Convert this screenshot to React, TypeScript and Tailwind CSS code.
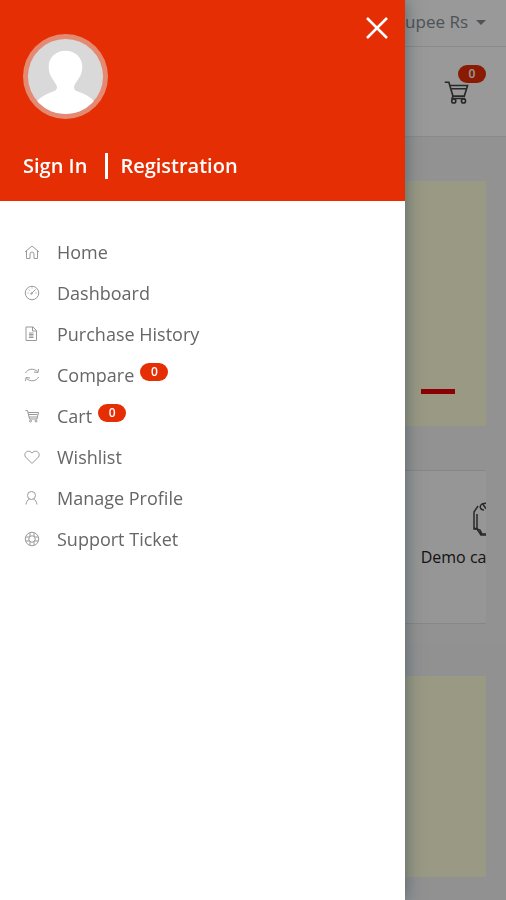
import type { ReactNode } from "react";

interface MenuItem {
  label: string;
  icon: ReactNode;
  count?: number;
}

const cartPaths = (
  <>
    <path d="M1 4h5l5 17h14L29 8H8" />
    <path d="M9 12h19M11 21l-1 3h16" />
    <circle cx="12" cy="27" r="2.500" />
    <circle cx="24" cy="27" r="2.500" />
  </>
);

const menuItems: MenuItem[] = [
  {
    label: "Home",
    icon: (
      <>
        <path d="M2 16 16 4l14 12" />
        <path d="M5 14v15h7V20q0-4 4-4t4 4v9h7V14" />
      </>
    ),
  },
  {
    label: "Dashboard",
    icon: (
      <>
        <circle cx="16" cy="16" r="13.500" />
        <path d="m15 17 8-8M7 16h2M10 9l1 2M16 5v2M23 16h2" />
        <circle cx="15" cy="17" r="1.500" />
      </>
    ),
  },
  {
    label: "Purchase History",
    icon: (
      <>
        <path d="M4 2h14l7 7v20H4zM17 2v8h8" />
        <path d="M10 14h9M10 17h9M10 20h9M10 23h9" />
      </>
    ),
  },
  {
    label: "Compare",
    count: 0,
    icon: (
      <>
        <path d="M3 12C7 3 20 2 27 9M29 4l-1 7-8-1" />
        <path d="M29 20C25 29 12 30 5 23M3 28l1-7 8 1" />
      </>
    ),
  },
  {
    label: "Cart",
    count: 0,
    icon: (
      <>
        <path d="M3 5h4l4 17h15l3-13H8" />
        <path d="M9 13h18M10 18h17" />
        <circle cx="13" cy="26" r="2" />
        <circle cx="24" cy="26" r="2" />
      </>
    ),
  },
  { label: "Wishlist", icon: <path d="M16 29 3 16C-2 9 7-1 16 8c9-9 18 1 13 8z" /> },
  {
    label: "Manage Profile",
    icon: (
      <>
        <circle cx="15" cy="11" r="8" />
        <path d="M4 29c1-6 3-9 7-11M19 18c4 2 6 5 7 11" />
      </>
    ),
  },
  {
    label: "Support Ticket",
    icon: (
      <>
        <circle cx="16" cy="16" r="13.500" />
        <circle cx="16" cy="16" r="6.500" />
        <path d="M12 4v7M20 4v7M12 21v7M20 21v7M4 12h7M4 20h7M21 12h7M21 20h7" />
      </>
    ),
  },
];

function LineIcon({ children, className }: { children: ReactNode; className: string }) {
  return (
    <svg viewBox="0 0 32 32" fill="none" stroke="currentColor" strokeWidth="2" className={className} aria-hidden="true">
      {children}
    </svg>
  );
}

function CountBadge({ count }: { count: number }) {
  return <span className="flex h-[18px] w-7 items-center justify-center rounded-full bg-[#e62e04] text-xs font-semibold text-white">{count}</span>;
}

function StorePage() {
  return (
    <div className="min-h-screen overflow-hidden bg-[#f5f4f3]">
      <div className="flex h-[47px] items-center justify-end border-b border-[#e6e6e6] bg-white px-5">
        <button className="flex items-center gap-2 pb-0.5 text-[17px] whitespace-nowrap text-[#818a91]">
          Indian Rupee Rs
          <svg viewBox="0 0 10 5" className="h-[5px] w-[10px]" fill="currentColor" aria-hidden="true"><path d="M0 0h10L5 5z" /></svg>
        </button>
      </div>
      <header className="flex h-[90px] items-center justify-end border-b border-[#e6e6e6] bg-white px-5">
        <a href="#cart" aria-label="Cart" className="relative mr-4 text-[#444]">
          <LineIcon className="h-[26px] w-[26px]">{cartPaths}</LineIcon>
          <span className="absolute -top-[14px] left-[14px]"><CountBadge count={0} /></span>
        </a>
      </header>
      <main className="px-5 pt-11">
        <section className="flex h-[245px] items-end justify-end bg-[#ffffdd] px-[31px] pb-8">
          <span className="h-[5px] w-[34px] bg-[#e60008]"></span>
        </section>
        <section className="mt-11 flex h-[154px] justify-end overflow-hidden border-y border-[#e2e2e2] bg-[#fbfbfb]">
          <div className="-mr-12 flex shrink-0 flex-col items-center pt-[30px] text-[#222]">
            <svg viewBox="0 0 24 36" className="ml-[14px] h-9 w-6" fill="none" stroke="#444" strokeWidth="1.5" aria-hidden="true">
              <path d="M12 9c-4 0-5-4-2-6 3-1 7-1 9 1l3 5v20l-5 5H9l-4-6H2V11l4-6" />
              <path d="M10 3c2 0 3 5 5 5M5 13v15M2 27l6 2 1 5M8 29l2 4h5" />
            </svg>
            <h2 className="mt-2 text-base whitespace-nowrap">Demo category</h2>
          </div>
        </section>
      </main>
      <section className="mt-[19px] bg-[#f2f2f4] px-5 py-[33px]">
        <div className="h-[201px] bg-[#ffffdd]"></div>
      </section>
    </div>
  );
}

function SideMenu() {
  return (
    <aside className="fixed inset-y-0 left-0 w-4/5 bg-white shadow-[0_0_16px_rgba(20,50,60,0.5)]">
      <div className="relative bg-[#e62e04] px-[23px] pt-[34px] pb-5 text-white">
        <button aria-label="Close menu" className="absolute top-4 right-4">
          <svg viewBox="0 0 24 24" className="h-6 w-6" fill="none" stroke="currentColor" strokeWidth="2.5" aria-hidden="true"><path d="m2 2 20 20M22 2 2 22" /></svg>
        </button>
        <svg viewBox="0 0 86 86" className="h-[85px] w-[85px]" role="img" aria-label="Profile picture">
          <defs>
            <clipPath id="avatar"><circle cx="43" cy="43" r="38" /></clipPath>
          </defs>
          <circle cx="43" cy="43" r="43" fill="#e48a72" />
          <circle cx="43" cy="43" r="38" fill="#d9d9d9" />
          <path clipPath="url(#avatar)" fill="#fff" d="M43 17c-10 0-17 7-17 16 0 10 5 13 8 19 1 3 0 5-3 6-6 2-12 5-17 10v18h58V68c-5-5-11-8-17-10-3-1-4-3-3-6 3-6 8-9 8-19 0-9-7-16-17-16z" />
        </svg>
        <div className="mt-8 flex h-[30px] items-center text-xl leading-[30px] font-semibold">
          <a href="#login">Sign In</a>
          <span className="mr-3 ml-[18px] h-[26px] w-[3px] bg-white"></span>
          <a href="#registration">Registration</a>
        </div>
      </div>
      <nav className="px-6 pt-[30px]">
        <ul>
          {menuItems.map((item) => (
            <li key={item.label}>
              <a href="#menu" className="flex h-[41px] items-center text-lg text-[#666]">
                <LineIcon className="mr-[17px] h-4 w-4 text-[#999]">{item.icon}</LineIcon>
                {item.label}
                {item.count !== undefined && <span className="mb-1.5 ml-1.5"><CountBadge count={item.count} /></span>}
              </a>
            </li>
          ))}
        </ul>
      </nav>
    </aside>
  );
}

export default function App() {
  return (
    <div className="font-['Open_Sans',sans-serif]">
      <StorePage />
      <div className="fixed inset-0 bg-black/40"></div>
      <SideMenu />
    </div>
  );
}
